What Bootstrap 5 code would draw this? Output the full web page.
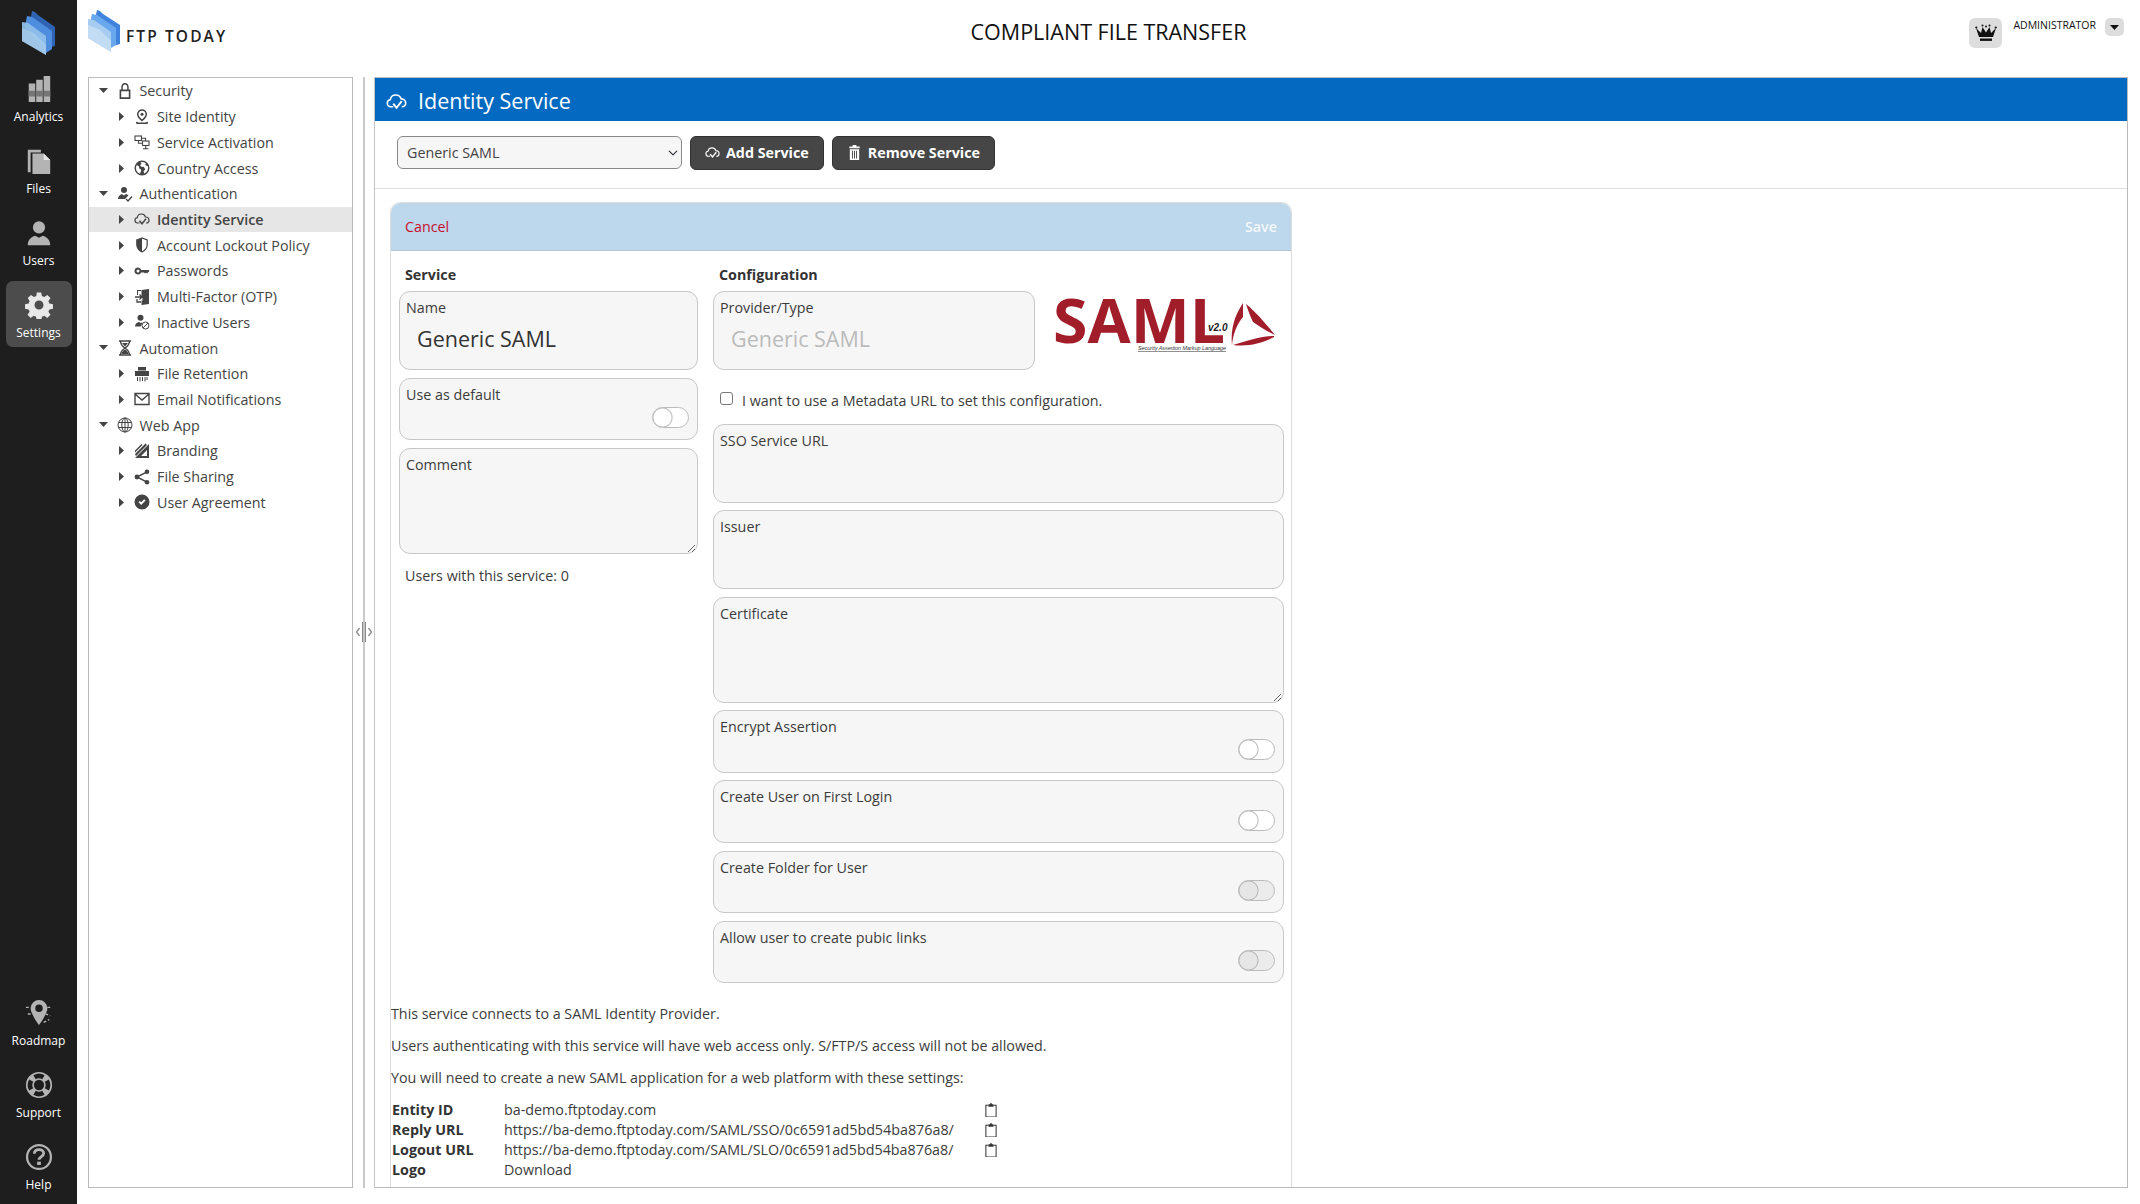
<!DOCTYPE html>
<html lang="en">
<head>
<meta charset="utf-8">
<title>FTP Today - Identity Service</title>
<link href="https://cdn.jsdelivr.net/npm/bootstrap@5.3.0/dist/css/bootstrap.min.css" rel="stylesheet">
<style>
html,body{height:100%;overflow:hidden}
body{font-family:"Open Sans","Liberation Sans",sans-serif;font-size:14.3px;color:#3c3c3c;background:#fff}
.app-shell{height:1204px}
.side-rail{width:77px;flex:none;background:#1e1e1e;color:#fff;padding-top:65px;padding-bottom:5px}
.rail-logo{position:absolute;left:20px;top:8px}
.rail-item{width:66px;height:66px;margin:0 auto 6px;border-radius:7px;font-size:12px;line-height:16px;color:#fff;text-decoration:none;padding-top:10px}
.rail-item svg{width:28px;height:28px;color:#b4b4b4;margin-bottom:6px;flex:none}
.rail-item.is-on{background:#4c4c4c}
.rail-item.is-on svg{color:#e8e8e8}
.rail-low{margin-top:auto}
.top-strip{height:77px;flex:none}
.brand-mark{margin-left:10px;margin-top:9px}
.brand-word{font-size:15.5px;font-weight:600;letter-spacing:2.1px;color:#222;margin-left:5px;margin-top:25px;line-height:22px;white-space:nowrap}
.app-title{position:absolute;left:0;right:0;top:16px;text-align:center;font-size:21.5px;line-height:32px;color:#111;margin:0;font-weight:400;pointer-events:none}
.user-zone{margin-left:auto;margin-right:16px;margin-top:18px}
.crown-box{width:33px;height:30px;background:#ddd;border-radius:6px;margin-right:11px}
.crown-box svg{width:22px;height:22px}
.user-name{font-size:10.5px;line-height:15px;color:#111}
.caret-box{width:19px;height:18px;background:#ddd;border-radius:5px;margin-left:9px}
.body-strip{height:1111px}
.tree-pane{width:265px;margin-left:11px;border:1px solid #bbb;height:1111px;flex:none}
.tree-row{height:25.72px;line-height:25px;white-space:nowrap;color:#444}
.tree-row svg.tw{width:16px;height:16px;flex:none;color:#444}
.tree-row.lvl0{padding-left:10px}
.tree-row.lvl1{padding-left:30px}
.tw-caret{width:10px;flex:none}
.lvl0 .tw-caret svg{width:9px;height:6px}
.lvl1 .tw-caret svg{width:6px;height:9px}
.lvl0 .tw-caret{margin-right:7.5px}
.lvl1 .tw-caret{margin-right:5px}
.tree-row .tw{margin-right:7px}
.tree-row.is-on{background:#e6e6e6;font-weight:600}
.split-bar{width:21px;flex:none}
.split-line{width:2px;background:#c9c9c9;height:100%}
.split-grip{top:545px;left:0;width:21px;height:20px;background:#fff}
.main-pane{flex:1;margin-right:12px;height:1111px;border:1px solid #bbb;border-left-color:#c4c4c4;overflow:hidden;min-width:0}
.pane-head{height:43px;background:#0469c0;color:#fff;font-size:21.5px;line-height:44px;padding:3px 0 0 11px}
.pane-head svg{width:21px;height:21px;margin-right:11px}
.tool-strip{height:68px;border-bottom:1px solid #ddd;padding:15px 0 0 22px}
.svc-select{width:285px;height:33px;font-size:14.3px;padding:2px 24px 2px 9px;border-color:#888;border-radius:6px;background-color:#f6f6f6;color:#444;background-position:right 2px center;background-size:12px 10px}
.dark-btn{height:34px;background:#464646;border:1px solid #333;border-radius:6px;color:#fff;font-weight:700;font-size:14.3px;padding:0 14px;margin-left:8px;line-height:32px;white-space:nowrap}
.dark-btn svg{width:15px;height:15px;margin-right:6px;vertical-align:-2px}
.svc-card{width:902px;margin:13px 0 0 15px;border:1px solid #ddd;border-radius:11px 11px 0 0;height:1000px;border-bottom:0}
.svc-card .card-header{height:48px;background:#bdd7ec;border:0;border-bottom:1px solid #b3c8d9;border-radius:10px 10px 0 0;padding:0 14px;line-height:48px}
.cancel-link{color:#c8102e;text-decoration:none}
.save-link{color:#fff;font-weight:600;text-decoration:none;opacity:.85}
.form-cols{padding:0 0 0 8px;gap:15px}
.col-left{width:299px;flex:none}
.col-right{width:571px;flex:none}
.sec-title{font-weight:700;height:40px;line-height:20px;padding:14px 0 0 6px;color:#333;box-sizing:border-box}
.field-box{display:flex;flex-direction:column;background:#f6f6f6;border:1px solid #c8c8c8;border-radius:11px;padding:6px 6px 0;position:relative;margin-bottom:7.6px}
.field-box label{line-height:20px;font-size:14.3px;color:#3c3c3c;margin:0}
.h-tall{height:79px}
.h-mid{height:62.5px}
.h-area-a{height:106px}
.field-text{background:transparent;border:0;outline:0;font-size:21.5px;padding:6px 0 0 11px;line-height:30px;color:#333;width:100%;box-shadow:none}
.field-text:disabled{color:#bbb;background:transparent}
.field-area{flex:1;background:transparent;border:0;outline:0;box-shadow:none;padding:0;font-size:14.3px;margin-right:-5px;min-height:0}
.switch-row{margin:0;padding:0;min-height:0;position:absolute;right:8px;bottom:11px}
.switch-row .form-check-input{width:37px;height:21px;margin:0;float:none;border:1px solid #bbb;background:#fff;background-image:radial-gradient(circle at 9.5px 9.5px,#fff 8.5px,#bbb 9.5px,#f8f8f8 10.5px,transparent 11px);background-size:100% 100%;box-shadow:none}
.switch-row .form-check-input:disabled{opacity:1;background:#ececec;background-image:radial-gradient(circle at 9.5px 9.5px,#e6e6e6 8.5px,#b5b5b5 9.5px,#ececec 10.5px,transparent 11px)}
.saml-logo{width:250px;height:70px;margin:-1px -7px 0 6px;flex:none;overflow:visible}
.meta-row{height:46px;padding:0 0 0 7px;margin:0;gap:9px;line-height:20px}
.meta-row .form-check-input{width:13px;height:13px;margin:0;border-color:#777;border-radius:3px;position:relative;top:-2px}
.count-line{padding:5px 0 0 6px;line-height:20px}
.info-block{padding:13px 0 0 0}
.info-block p{margin:0 0 12px;line-height:20px}
.info-grid{display:grid;grid-template-columns:112px 481px 20px;line-height:20px;margin-top:12px;margin-left:1px;align-items:center}
.info-grid b{font-weight:700;color:#333}
.clip-ic{width:12px;height:14.5px;color:#333;display:block}
</style>
</head>
<body>
<svg width="0" height="0" class="position-absolute">
<defs>
<symbol id="i-lock" viewBox="0 0 16 16"><path fill="currentColor" d="M8 0C5.600 0 4.300 1.700 4.300 4v2.600H2.600V16h10.800V6.600h-1.700V4C11.700 1.700 10.400 0 8 0zM5.800 6.600V4C5.800 2.500 6.600 1.400 8 1.400S10.200 2.500 10.200 4v2.600zM4.200 8.300h7.600v6H4.200z" fill-rule="evenodd"/></symbol>
<symbol id="i-pin" viewBox="0 0 16 16"><path fill="none" stroke="currentColor" stroke-width="1.500" d="M8 1a4.300 4.300 0 0 1 4.300 4.300C12.300 8 8 11.500 8 11.500S3.700 8 3.700 5.300A4.300 4.300 0 0 1 8 1z"/><circle cx="8" cy="5.200" r="1.500" fill="currentColor"/><path fill="currentColor" d="M3 12.500c-1.500.7-1.500 2.500.5 2.500h9c2 0 2-1.800.5-2.500l-1 1H4z"/></symbol>
<symbol id="i-nodes" viewBox="0 0 16 16"><g fill="none" stroke="currentColor" stroke-width="1.100"><rect x="1" y="2" width="6.500" height="4.500"/><rect x="8.500" y="7" width="6.500" height="4.500"/><path d="M7.500 4.200h4v2.800M8.500 9.200h-4V6.500M11.700 11.500v3M9 14.700h5.500"/></g></symbol>
<symbol id="i-globe" viewBox="0 0 16 16"><path fill="currentColor" fill-rule="evenodd" d="M8 .5a7.500 7.500 0 1 0 0 15 7.500 7.500 0 0 0 0-15zM2 8c0-1 .3-2 .8-2.900L5 6.600l.3 1.800 1.700 1 .2 1.300-1.300 3A6 6 0 0 1 2 8zm8.300 5.500-.8-2 1.700-2.200-1.300-2.200-2.600-.4L6 5.200l1.600-1.400L6.400 2.300a6 6 0 0 1 5.600 1.200l-.9 1.600 2.800 1.100a6 6 0 0 1-3.600 7.300z"/></symbol>
<symbol id="i-ucheck" viewBox="0 0 16 16"><circle cx="7" cy="4" r="3" fill="currentColor"/><path fill="currentColor" d="M1 13c0-2.500 2-4.500 4-5l2 1.500L9 8c1 .2 1.800.8 2.400 1.500L8 13z"/><path fill="none" stroke="currentColor" stroke-width="1.300" d="M9 13l2 2 4-4.500"/></symbol>
<symbol id="i-cloud" viewBox="0 0 16 16"><path fill="none" stroke="currentColor" stroke-width="1.200" stroke-linejoin="round" d="M5.500 12H3.700A2.700 2.700 0 0 1 1 9.300C1 7.900 2 6.800 3.300 6.700 3.500 4.600 5.200 3 7.500 3c1.900 0 3.500 1.200 4 3 1.900 0 3.500 1.400 3.500 3.200S13.700 12 12 12"/><path fill="none" stroke="currentColor" stroke-width="1.500" d="M5.500 9.700 8 12.800l4-5"/></symbol>
<symbol id="i-shield" viewBox="0 0 16 16"><path fill="none" stroke="currentColor" stroke-width="1.200" d="M8 1 2.800 3v4.500c0 3.500 2.200 6 5.200 7.500 3-1.500 5.200-4 5.200-7.500V3z"/><path fill="currentColor" d="M8 1 2.800 3v4.500c0 3.500 2.200 6 5.200 7.500z"/></symbol>
<symbol id="i-key" viewBox="0 0 16 16"><path fill="currentColor" fill-rule="evenodd" d="M4 4.500a3.500 3.500 0 1 0 3.200 5H10l1 1 1-1 1 1 2.500-2.500-1-1H7.200A3.500 3.500 0 0 0 4 4.500zm0 2a1.500 1.500 0 1 1 0 3 1.500 1.500 0 0 1 0-3z"/></symbol>
<symbol id="i-door" viewBox="0 0 16 16"><path fill="currentColor" d="M7.500 1 15 0v15l-7.500 1v-4.500h1V9h-1zM7 2H4v4H3V1h4z"/><path fill="none" stroke="currentColor" stroke-width="1.300" d="M1 8h7M5.500 5.500 8 8l-2.500 2.500M3 10v3h4"/></symbol>
<symbol id="i-uban" viewBox="0 0 16 16"><circle cx="6.500" cy="3.800" r="3" fill="currentColor"/><path fill="currentColor" d="M1 12.500C1 10 3 8.500 5 8l2 1 1.500-.5-1.800 4z"/><circle cx="11.500" cy="11.500" r="3.500" fill="none" stroke="currentColor" stroke-width="1"/><path stroke="currentColor" stroke-width="1" d="m9 14 5-5"/></symbol>
<symbol id="i-hour" viewBox="0 0 16 16"><path fill="none" stroke="currentColor" stroke-width="1.400" d="M2 1h12M2 15h12M3.500 1c0 3.500 1.500 5 4.500 7 3 2 4.500 3.500 4.500 7M12.500 1c0 3.500-1.500 5-4.500 7-3 2-4.500 3.500-4.500 7"/><path fill="currentColor" d="M5 3h6L8 6.500zM4.500 14c.5-2 1.500-3.500 3.500-4.500 2 1 3 2.500 3.500 4.500z"/></symbol>
<symbol id="i-shred" viewBox="0 0 16 16"><path fill="currentColor" d="M4 1h8v3.500H4zM1 5h14v5H1zM3 11h1v4H3zM5.500 11h1v4.500h-1zM8 11h1v4H8zM10.500 11h1v4.500h-1zM12.500 11h1v3h-1z"/></symbol>
<symbol id="i-mail" viewBox="0 0 16 16"><path fill="none" stroke="currentColor" stroke-width="1.400" d="M1 2.500h14v11H1zM1 3l7 6 7-6"/></symbol>
<symbol id="i-web" viewBox="0 0 16 16"><g fill="none" stroke="currentColor" stroke-width="1"><circle cx="8" cy="8" r="7"/><ellipse cx="8" cy="8" rx="3.200" ry="7"/><path d="M8 1v14M1.300 5.500h13.400M1.300 10.500h13.400"/></g></symbol>
<symbol id="i-brand" viewBox="0 0 16 16"><path fill="currentColor" d="M1 15 15 1v14zm6-2h6V7zM1 11 11.500 .5 13 2 2 13zM1 7.500 7.500 1 8.500 2 1 9.500z" fill-rule="evenodd"/></symbol>
<symbol id="i-share" viewBox="0 0 16 16"><g fill="currentColor"><circle cx="3" cy="8" r="2.400"/><circle cx="13" cy="2.800" r="2.300"/><circle cx="13" cy="13.200" r="2.300"/></g><path fill="none" stroke="currentColor" stroke-width="1.500" d="M13 2.800 3 8l10 5.200"/></symbol>
<symbol id="i-ok" viewBox="0 0 16 16"><path fill="currentColor" fill-rule="evenodd" d="M8 .5a7.500 7.500 0 1 0 0 15 7.500 7.500 0 0 0 0-15zM4.500 8.200l1.300-1.300L7.200 8.300l3-3 1.300 1.300-4.300 4.300z"/></symbol>
<symbol id="i-trash" viewBox="0 0 16 16"><path fill="currentColor" fill-rule="evenodd" d="M6 0h4v1.500h3.500v2h-11v-2H6zM3 4.500h10V16H3zM5.300 6v8.500h1V6zM7.500 6v8.500h1V6zM9.700 6v8.500h1V6z"/></symbol>
<symbol id="i-clip" viewBox="0 0 14 17"><path fill="none" stroke="currentColor" stroke-width="1.200" d="M4 2.600H1v13.800h12V2.600h-3"/><path fill="currentColor" d="M4 1.500h2V.3h2v1.200h2v3H4z"/></symbol>
</defs>
</svg>

<div class="app-shell d-flex position-relative">
  <nav class="side-rail d-flex flex-column position-relative">
    <svg class="rail-logo" width="38" height="50" viewBox="0 0 38 50" aria-hidden="true">
      <path fill="#2e64b3" d="M12 3l3 1 3 3 17 12v19l-8 2L10 14z"/>
      <path fill="#4f8ede" d="M7 8l5 1 20 14v18l-6 4L5 18z"/>
      <path fill="#8fbfe9" opacity=".95" d="M2 14l6 1 18 13v19L2 33z"/>
      <path fill="#b3d3ef" opacity=".55" d="M2 20l12 5 12 12v10L2 33z"/>
    </svg>
    <a class="rail-item d-flex flex-column align-items-center" href="#"><svg viewBox="0 0 30 30"><path fill="currentColor" d="M4 9h7v20H4zM12 5h7v24h-7zM20 1h7v28h-7z"/><path fill="#757575" d="M4 17h7v6H4zM12 17h7v6h-7zM20 17h7v6h-7z"/></svg>Analytics</a>
    <a class="rail-item d-flex flex-column align-items-center" href="#"><svg viewBox="0 0 30 30"><path fill="currentColor" d="M3 3h14v3H6v21H3z"/><path fill="currentColor" d="M8 7h12l7 7v15H8z"/><path fill="#e4e4e4" d="M20 7l7 7h-7z"/></svg>Files</a>
    <a class="rail-item d-flex flex-column align-items-center" href="#"><svg viewBox="0 0 30 30"><circle cx="15" cy="9" r="6.500" fill="currentColor"/><path fill="currentColor" d="M3 28c0-6 4-9 8-10l4 2 4-2c4 1 8 4 8 10z"/></svg>Users</a>
    <a class="rail-item is-on d-flex flex-column align-items-center" href="#"><svg viewBox="0 0 30 30"><path fill="currentColor" fill-rule="evenodd" d="M12.500 1h5l.8 4 2.600 1.100 3.400-2.300 3.500 3.500-2.300 3.400 1.100 2.600 4 .8v5l-4 .8-1.100 2.600 2.300 3.400-3.500 3.500-3.400-2.300-2.600 1.100-.8 4h-5l-.8-4-2.600-1.100-3.400 2.300-3.500-3.500 2.300-3.400-1.100-2.600-4-.8v-5l4-.8 1.100-2.600L2.500 7.300 6 3.800l3.400 2.300L12 5zM15 10a5 5 0 1 0 0 10 5 5 0 0 0 0-10z" transform="translate(.6 .6) scale(.96)"/></svg>Settings</a>
    <div class="rail-low">
      <a class="rail-item d-flex flex-column align-items-center" href="#"><svg viewBox="0 0 30 30"><path fill="currentColor" fill-rule="evenodd" d="M15 1a9 9 0 0 1 9 9c0 6-9 18-9 18S6 16 6 10a9 9 0 0 1 9-9zm0 5a4 4 0 1 0 0 8 4 4 0 0 0 0-8z"/><path stroke="currentColor" stroke-width="1.500" stroke-dasharray="3 2" fill="none" d="M1 9h5M24 9h5M3 16h5M22 16l5 2M20 25l6-3"/></svg>Roadmap</a>
      <a class="rail-item d-flex flex-column align-items-center" href="#"><svg viewBox="0 0 30 30"><path fill="currentColor" fill-rule="evenodd" d="M15 1a14 14 0 1 0 0 28 14 14 0 0 0 0-28zm0 8.500a5.500 5.500 0 1 1 0 11 5.500 5.500 0 0 1 0-11zM9 4.500a12 12 0 0 1 12 0l-2.500 4.300a7 7 0 0 0-7 0zM4.500 9l4.300 2.500a7 7 0 0 0 0 7L4.500 21a12 12 0 0 1 0-12zm21 0a12 12 0 0 1 0 12l-4.300-2.500a7 7 0 0 0 0-7zM11.500 21.200a7 7 0 0 0 7 0L21 25.500a12 12 0 0 1-12 0z"/></svg>Support</a>
      <a class="rail-item d-flex flex-column align-items-center mb-0" href="#"><svg viewBox="0 0 30 30"><circle cx="15" cy="15" r="12.800" fill="none" stroke="currentColor" stroke-width="2.400"/><path fill="none" stroke="currentColor" stroke-width="3" d="M10 11.500c0-3 2.200-4.500 5-4.500s5 1.500 5 4c0 3.500-5 3.500-5 7"/><rect x="13" y="20" width="4" height="3.500" fill="currentColor"/></svg>Help</a>
    </div>
  </nav>

  <div class="flex-grow-1 d-flex flex-column" style="min-width:0">
    <header class="top-strip d-flex position-relative">
      <svg class="brand-mark" width="34" height="46" viewBox="0 0 34 46" aria-hidden="true">
        <path fill="#3f83dd" d="M10 1l3 1 3 3 17 11v19l-7 2L8 10z"/>
        <path fill="#6aa8ee" d="M5 5l5 1 19 13v17l-5 3L3 14z"/>
        <path fill="#a6cdf1" d="M1 10l6 1 17 12v20L1 29z"/>
        <path fill="#cfe3f5" opacity=".7" d="M1 16l12 5 11 11v11L1 29z"/>
      </svg>
      <div class="brand-word">FTP TODAY</div>
      <h1 class="app-title">COMPLIANT FILE TRANSFER</h1>
      <div class="user-zone d-flex align-items-start">
        <div class="crown-box d-flex align-items-center justify-content-center">
          <svg viewBox="0 0 22 22"><path fill="#111" d="M1 6l5 5 1.500-6L11 10.500 14.500 5 16 11l5-5-3 9H4z"/><rect x="5" y="16.500" width="12" height="2.400" fill="#111"/><circle cx="1.300" cy="5.500" r="1.100" fill="#111"/><circle cx="20.700" cy="5.500" r="1.100" fill="#111"/><circle cx="7.500" cy="3.500" r="1" fill="#111"/><circle cx="14.500" cy="3.500" r="1" fill="#111"/><circle cx="11" cy="4.500" r="1" fill="#111"/></svg>
        </div>
        <div class="user-name">ADMINISTRATOR</div>
        <div class="caret-box d-flex align-items-center justify-content-center"><svg width="9" height="5" viewBox="0 0 9 5"><path fill="#111" d="M0 0h9L4.500 5z"/></svg></div>
      </div>
    </header>

    <div class="body-strip d-flex">
      <aside class="tree-pane">
        <div class="tree-row lvl0 d-flex align-items-center"><span class="tw-caret"><svg viewBox="0 0 9 6" class="d-block"><path fill="#444" d="M0 0h9L4.500 5z"/></svg></span><svg class="tw"><use href="#i-lock"/></svg>Security</div>
        <div class="tree-row lvl1 d-flex align-items-center"><span class="tw-caret"><svg viewBox="0 0 6 9" class="d-block"><path fill="#444" d="M0 0l5 4.500L0 9z"/></svg></span><svg class="tw"><use href="#i-pin"/></svg>Site Identity</div>
        <div class="tree-row lvl1 d-flex align-items-center"><span class="tw-caret"><svg viewBox="0 0 6 9" class="d-block"><path fill="#444" d="M0 0l5 4.500L0 9z"/></svg></span><svg class="tw"><use href="#i-nodes"/></svg>Service Activation</div>
        <div class="tree-row lvl1 d-flex align-items-center"><span class="tw-caret"><svg viewBox="0 0 6 9" class="d-block"><path fill="#444" d="M0 0l5 4.500L0 9z"/></svg></span><svg class="tw"><use href="#i-globe"/></svg>Country Access</div>
        <div class="tree-row lvl0 d-flex align-items-center"><span class="tw-caret"><svg viewBox="0 0 9 6" class="d-block"><path fill="#444" d="M0 0h9L4.500 5z"/></svg></span><svg class="tw"><use href="#i-ucheck"/></svg>Authentication</div>
        <div class="tree-row lvl1 is-on d-flex align-items-center"><span class="tw-caret"><svg viewBox="0 0 6 9" class="d-block"><path fill="#444" d="M0 0l5 4.500L0 9z"/></svg></span><svg class="tw"><use href="#i-cloud"/></svg>Identity Service</div>
        <div class="tree-row lvl1 d-flex align-items-center"><span class="tw-caret"><svg viewBox="0 0 6 9" class="d-block"><path fill="#444" d="M0 0l5 4.500L0 9z"/></svg></span><svg class="tw"><use href="#i-shield"/></svg>Account Lockout Policy</div>
        <div class="tree-row lvl1 d-flex align-items-center"><span class="tw-caret"><svg viewBox="0 0 6 9" class="d-block"><path fill="#444" d="M0 0l5 4.500L0 9z"/></svg></span><svg class="tw"><use href="#i-key"/></svg>Passwords</div>
        <div class="tree-row lvl1 d-flex align-items-center"><span class="tw-caret"><svg viewBox="0 0 6 9" class="d-block"><path fill="#444" d="M0 0l5 4.500L0 9z"/></svg></span><svg class="tw"><use href="#i-door"/></svg>Multi-Factor (OTP)</div>
        <div class="tree-row lvl1 d-flex align-items-center"><span class="tw-caret"><svg viewBox="0 0 6 9" class="d-block"><path fill="#444" d="M0 0l5 4.500L0 9z"/></svg></span><svg class="tw"><use href="#i-uban"/></svg>Inactive Users</div>
        <div class="tree-row lvl0 d-flex align-items-center"><span class="tw-caret"><svg viewBox="0 0 9 6" class="d-block"><path fill="#444" d="M0 0h9L4.500 5z"/></svg></span><svg class="tw"><use href="#i-hour"/></svg>Automation</div>
        <div class="tree-row lvl1 d-flex align-items-center"><span class="tw-caret"><svg viewBox="0 0 6 9" class="d-block"><path fill="#444" d="M0 0l5 4.500L0 9z"/></svg></span><svg class="tw"><use href="#i-shred"/></svg>File Retention</div>
        <div class="tree-row lvl1 d-flex align-items-center"><span class="tw-caret"><svg viewBox="0 0 6 9" class="d-block"><path fill="#444" d="M0 0l5 4.500L0 9z"/></svg></span><svg class="tw"><use href="#i-mail"/></svg>Email Notifications</div>
        <div class="tree-row lvl0 d-flex align-items-center"><span class="tw-caret"><svg viewBox="0 0 9 6" class="d-block"><path fill="#444" d="M0 0h9L4.500 5z"/></svg></span><svg class="tw"><use href="#i-web"/></svg>Web App</div>
        <div class="tree-row lvl1 d-flex align-items-center"><span class="tw-caret"><svg viewBox="0 0 6 9" class="d-block"><path fill="#444" d="M0 0l5 4.500L0 9z"/></svg></span><svg class="tw"><use href="#i-brand"/></svg>Branding</div>
        <div class="tree-row lvl1 d-flex align-items-center"><span class="tw-caret"><svg viewBox="0 0 6 9" class="d-block"><path fill="#444" d="M0 0l5 4.500L0 9z"/></svg></span><svg class="tw"><use href="#i-share"/></svg>File Sharing</div>
        <div class="tree-row lvl1 d-flex align-items-center"><span class="tw-caret"><svg viewBox="0 0 6 9" class="d-block"><path fill="#444" d="M0 0l5 4.500L0 9z"/></svg></span><svg class="tw"><use href="#i-ok"/></svg>User Agreement</div>
      </aside>

      <div class="split-bar position-relative d-flex justify-content-center">
        <div class="split-line"></div>
        <div class="split-grip position-absolute d-flex align-items-center justify-content-center">
          <svg width="18" height="20" viewBox="0 0 18 20"><path fill="none" stroke="#8f8f8f" stroke-width="1.400" d="M4.500 6 1.500 10l3 4M13.500 6l3 4-3 4"/><path fill="#8a8a8a" d="M7 0h1.500v20H7zM9.500 0H11v20H9.500z"/></svg>
        </div>
      </div>

      <main class="main-pane">
        <div class="pane-head d-flex align-items-center"><svg><use href="#i-cloud"/></svg>Identity Service</div>
        <div class="tool-strip d-flex align-items-start">
          <select class="form-select svc-select"><option>Generic SAML</option></select>
          <button type="button" class="btn dark-btn"><svg><use href="#i-cloud"/></svg>Add Service</button>
          <button type="button" class="btn dark-btn"><svg><use href="#i-trash"/></svg>Remove Service</button>
        </div>

        <div class="card svc-card">
          <div class="card-header d-flex justify-content-between">
            <a class="cancel-link" href="#">Cancel</a>
            <a class="save-link" href="#">Save</a>
          </div>
          <div class="form-cols d-flex">
            <div class="col-left">
              <div class="sec-title">Service</div>
              <div class="field-box h-tall"><label for="f-name">Name</label><input id="f-name" class="field-text" value="Generic SAML"></div>
              <div class="field-box h-mid"><label>Use as default</label><div class="form-check form-switch switch-row"><input class="form-check-input" type="checkbox" role="switch"></div></div>
              <div class="field-box h-area-a"><label for="f-com">Comment</label><textarea id="f-com" class="field-area"></textarea></div>
              <div class="count-line">Users with this service: 0</div>
            </div>
            <div class="col-right">
              <div class="sec-title">Configuration</div>
              <div class="d-flex">
                <div class="field-box h-tall" style="width:323px"><label for="f-prov">Provider/Type</label><input id="f-prov" class="field-text" value="Generic SAML" disabled></div>
                <svg class="saml-logo" viewBox="0 0 250 70" aria-label="SAML logo">
                  <text x="12" y="53" font-family="'Open Sans','Liberation Sans',sans-serif" font-weight="700" font-size="60" fill="#a21d2a" textLength="172" lengthAdjust="spacingAndGlyphs">SAML</text>
                  <text x="167" y="41" font-family="'Liberation Sans',sans-serif" font-style="italic" font-weight="700" font-size="10" fill="#222">v2.0</text>
                  <text x="97" y="60" font-family="'Liberation Sans',sans-serif" font-style="italic" font-size="5.500" fill="#333" textLength="88" text-decoration="underline">Security Assertion Markup Language</text>
                  <path fill="#a21d2a" d="M202 13C196 22 189 36 191 55 192 44 196 34 202 27zM205 14C215 22 225 34 234 45 225 41 218 36 212 32 209 26 207 20 205 14zM233 46C222 46 212 49 192 55 205 57 221 54 233 47z"/>
                </svg>
              </div>
              <div class="form-check meta-row d-flex align-items-center"><input class="form-check-input" type="checkbox" id="f-meta"><label for="f-meta">I want to use a Metadata URL to set this configuration.</label></div>
              <div class="field-box h-tall"><label for="f-sso">SSO Service URL</label></div>
              <div class="field-box h-tall"><label for="f-iss">Issuer</label></div>
              <div class="field-box h-area-a"><label for="f-cert">Certificate</label><textarea id="f-cert" class="field-area"></textarea></div>
              <div class="field-box h-mid"><label>Encrypt Assertion</label><div class="form-check form-switch switch-row"><input class="form-check-input" type="checkbox" role="switch"></div></div>
              <div class="field-box h-mid"><label>Create User on First Login</label><div class="form-check form-switch switch-row"><input class="form-check-input" type="checkbox" role="switch"></div></div>
              <div class="field-box h-mid"><label>Create Folder for User</label><div class="form-check form-switch switch-row"><input class="form-check-input" type="checkbox" role="switch" disabled></div></div>
              <div class="field-box h-mid"><label>Allow user to create pubic links</label><div class="form-check form-switch switch-row"><input class="form-check-input" type="checkbox" role="switch" disabled></div></div>
            </div>
          </div>
          <div class="info-block">
            <p>This service connects to a SAML Identity Provider.</p>
            <p>Users authenticating with this service will have web access only. S/FTP/S access will not be allowed.</p>
            <p>You will need to create a new SAML application for a web platform with these settings:</p>
            <div class="info-grid">
              <b>Entity ID</b><span>ba-demo.ftptoday.com</span><svg class="clip-ic"><use href="#i-clip"/></svg>
              <b>Reply URL</b><span>https://ba-demo.ftptoday.com/SAML/SSO/0c6591ad5bd54ba876a8/</span><svg class="clip-ic"><use href="#i-clip"/></svg>
              <b>Logout URL</b><span>https://ba-demo.ftptoday.com/SAML/SLO/0c6591ad5bd54ba876a8/</span><svg class="clip-ic"><use href="#i-clip"/></svg>
              <b>Logo</b><span>Download</span><span></span>
            </div>
          </div>
        </div>
      </main>
    </div>
  </div>
</div>
<script src="https://cdn.jsdelivr.net/npm/bootstrap@5.3.0/dist/js/bootstrap.bundle.min.js"></script>
</body>
</html>
